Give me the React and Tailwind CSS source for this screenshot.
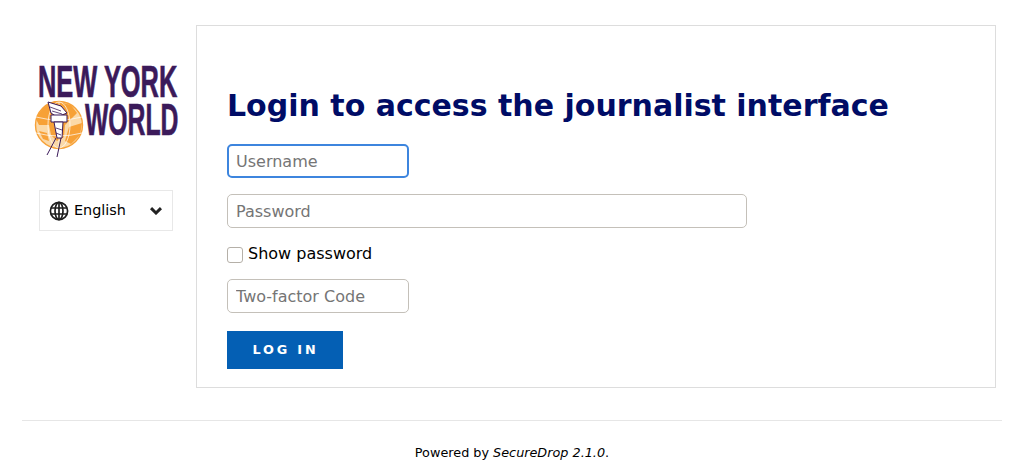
import React from "react";

function Logo() {
  const ink = "#3b1a5a";
  return (
    <svg width="146" height="95" viewBox="0 0 146 95" className="block overflow-visible">
      <text transform="translate(5 34) scale(0.565 1)" fontFamily="'Liberation Sans', sans-serif" fontWeight="700" fontSize="45" fill={ink} stroke={ink} strokeWidth="0.7">NEW YORK</text>
      <text transform="translate(52 72) scale(0.55 1)" fontFamily="'Liberation Sans', sans-serif" fontWeight="700" fontSize="45" fill={ink} stroke={ink} strokeWidth="0.7">WORLD</text>
      <circle cx="26" cy="62" r="23.5" fill="#fbd9a8" stroke="#f7a137" strokeWidth="1.4" />
      <path d="M3 56 Q9 42 22 38 L38 42 L44 50 L38 56 L32 62 L31 74 L24 78 L18 72 L16 62 L6 62 Z" fill="#f7a137" />
      <path d="M36 64 L49 60 L47 72 L38 81 L32 78 Z M6 68 L14 70 L16 78 L10 76 Z" fill="#f7a137" />
      <g fill="none" stroke="#fff" strokeWidth="0.7">
        <ellipse cx="26" cy="62" rx="11" ry="23" />
        <path d="M3 54 Q26 60 49 54 M3 70 Q26 76 49 70 M26 39 V85" />
      </g>
      <g fill="#fff" stroke={ink} strokeWidth="1">
        <path d="M15 39 L28 43 L34 50 L24 54 L18 50 Z" />
        <path d="M18 52 H34 V59 H18 Z" />
        <path d="M21 59 H30 L29 75 H24 Z" />
      </g>
      <path d="M17 44 L28 48 M19 48 L29 51 M23 65 L29 67 M23 70 L28 72" fill="none" stroke={ink} strokeWidth="0.8" />
      <path d="M23 75 L14 92 M28 75 L24 94" fill="none" stroke={ink} strokeWidth="1" />
    </svg>
  );
}

function Globe() {
  return (
    <svg width="20" height="20" viewBox="0 0 20 20" fill="none" stroke="#1f1f1f" strokeWidth="1.7">
      <circle cx="10" cy="10" r="8.6" />
      <ellipse cx="10" cy="10" rx="4" ry="8.6" />
      <path d="M10 1.4V18.6M1.9 7H18.1M1.9 13H18.1" />
    </svg>
  );
}

const inputCls =
  "block h-[34px] rounded-[5px] bg-white text-[16px] text-black placeholder:text-[#757575] outline-none";

export default function App() {
  return (
    <div className="min-h-[471px] bg-white text-black font-['DejaVu_Sans',sans-serif]">
      <div className="flex pt-[25px] pl-[28px] pr-[28px]">
        <aside className="w-[168px] shrink-0 flex flex-col">
          <div className="ml-[5px] mt-[38px]">
            <Logo />
          </div>
          <div className="ml-[11px] mt-[32px] w-[134px] h-[41px] border border-[#e8e8e8] flex items-center pl-[9px] pr-[10px]">
            <Globe />
            <span className="ml-[5px] text-[14.4px]">English</span>
            <svg className="ml-auto" width="12" height="8" viewBox="0 0 12 8" fill="none" stroke="#222" strokeWidth="3">
              <path d="M1 1.2 L6 6 L11 1.2" />
            </svg>
          </div>
        </aside>
        <main className="w-[800px] h-[363px] border border-[#dddddd] pl-[30px] pt-[60px]">
          <h1 className="text-[30px] leading-[40px] font-bold text-[#000c66] m-0">Login to access the journalist interface</h1>
          <form className="mt-[18px]">
            <input className={`${inputCls} w-[182px] border-2 border-[#3d85de] px-[7px]`} placeholder="Username" />
            <input className={`${inputCls} w-[520px] mt-[16px] border border-[#c4c0b9] px-2`} placeholder="Password" />
            <label className="mt-[16px] flex items-center h-[20px]">
              <span className="w-[16px] h-[16px] rounded-[3px] border border-[#b5b0a8] bg-white mt-[2px]" />
              <span className="ml-[5px] text-[16px]">Show password</span>
            </label>
            <input className={`${inputCls} w-[182px] mt-[15px] border border-[#c4c0b9] px-2`} placeholder="Two-factor Code" />
            <button type="button" className="mt-[18px] block w-[116px] h-[38px] bg-[#045fb4] text-white text-[12.8px] font-bold tracking-[2.8px] pl-[1px]">LOG IN</button>
          </form>
        </main>
      </div>
      <div className="mx-[22px] mt-[32px] border-t border-[#e6e6e6]" />
      <p className="mt-[24px] text-center text-[12.8px] leading-[16px] m-0">Powered by <em>SecureDrop 2.1.0</em>.</p>
    </div>
  );
}
